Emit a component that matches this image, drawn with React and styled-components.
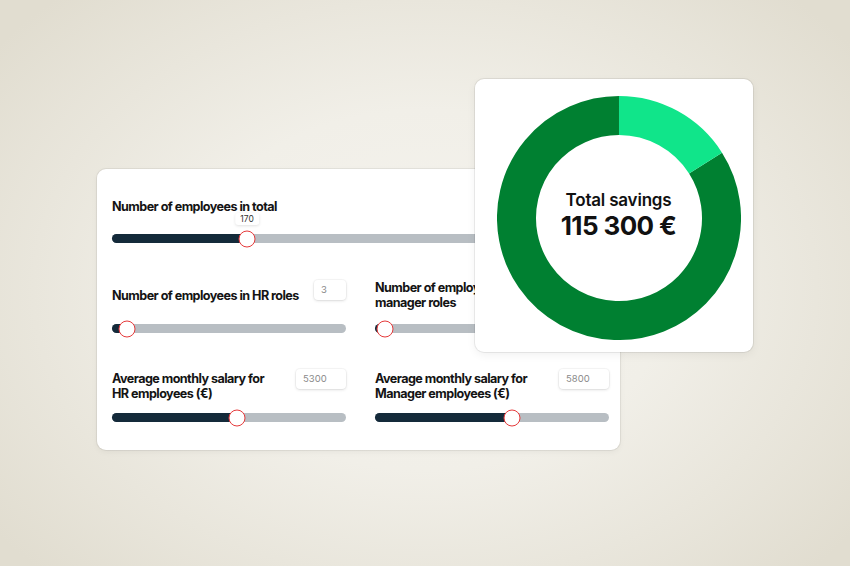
import styled, { createGlobalStyle } from "styled-components";

const GlobalStyle = createGlobalStyle`
  html, body {
    margin: 0;
    padding: 0;
  }
  body {
    font-family: Inter, "Noto Sans", sans-serif;
    color: #111;
  }
`;

const Page = styled.div`
  width: 850px;
  height: 566px;
  overflow: hidden;
  background: radial-gradient(
    ellipse 540px 400px at 425px 290px,
    #f5f3ee 0%,
    #f1efe8 45%,
    #e1ddd0 100%
  );
  display: grid;
  grid-template-columns: 97px 378px 145px 133px 1fr;
  grid-template-rows: 79px 90px 183px 98px 1fr;
`;

const InputsCard = styled.div`
  grid-column: 2 / 4;
  grid-row: 3 / 5;
  background: #fff;
  border-radius: 9px;
  box-shadow: 0 0 0 1px rgba(0, 0, 0, 0.06), 0 2px 6px rgba(0, 0, 0, 0.05);
  padding: 27px 13px 0 15px;
  display: grid;
  grid-template-columns: 234px 234px;
  column-gap: 29px;
  grid-template-rows: 72px 101px auto;
`;

const ChartCard = styled.div`
  grid-column: 3 / 5;
  grid-row: 2 / 4;
  background: #fff;
  border-radius: 9px;
  box-shadow: 0 0 0 1px rgba(0, 0, 0, 0.07), 0 3px 10px rgba(0, 0, 0, 0.06);
  z-index: 2;
  display: flex;
  justify-content: center;
  align-items: flex-start;
  padding: 17px 0 0 9px;
`;

const Field = styled.div`
  grid-column: ${(p) => (p.$wide ? "1 / 3" : "auto")};
  display: flex;
  flex-direction: column;
`;

const FieldHead = styled.div`
  display: flex;
  justify-content: space-between;
  align-items: flex-start;
  box-sizing: border-box;
  height: ${(p) => p.$h}px;
  padding-top: ${(p) => p.$pt || 0}px;
`;

const Label = styled.div`
  font-size: 12.6px;
  font-weight: 700;
  line-height: 15px;
  letter-spacing: -0.55px;
  color: #141414;
  padding-top: ${(p) => p.$pt || 0}px;
`;

const ValueBox = styled.div`
  width: ${(p) => p.$w}px;
  height: 20px;
  box-sizing: border-box;
  border-radius: 4px;
  background: #fff;
  box-shadow: 0 1px 3px rgba(0, 0, 0, 0.12), 0 0 0 1px rgba(0, 0, 0, 0.03);
  font-size: 9.5px;
  color: #8a8a8a;
  padding: 4px 0 0 7px;
`;

const Track = styled.div`
  position: relative;
  height: 9px;
  border-radius: 5px;
  background: #b8bec3;
  width: ${(p) => p.$w}px;
`;

const Fill = styled.div`
  height: 100%;
  border-radius: 5px 0 0 5px;
  background: #142a3a;
`;

const Thumb = styled.div`
  position: absolute;
  top: 50%;
  width: 17px;
  height: 17px;
  box-sizing: border-box;
  border-radius: 50%;
  background: #fff;
  border: 1.5px solid #e5393a;
  transform: translate(-50%, -50%);
`;

const Bubble = styled.div`
  position: absolute;
  bottom: 18px;
  transform: translateX(-50%);
  padding: 1px 5px;
  line-height: 10px;
  border-radius: 3px;
  background: #fff;
  box-shadow: 0 1px 3px rgba(0, 0, 0, 0.12);
  font-size: 8.5px;
  color: #333;
`;

const Donut = styled.div`
  position: relative;
  width: 244px;
  height: 244px;
`;

const Center = styled.div`
  position: absolute;
  inset: 0;
  display: flex;
  flex-direction: column;
  align-items: center;
  justify-content: center;
  padding-bottom: 6px;
  box-sizing: border-box;
`;

const CenterTitle = styled.div`
  font-size: 17px;
  font-weight: 600;
  letter-spacing: -0.2px;
  line-height: 22px;
`;

const CenterValue = styled.div`
  font-size: 26px;
  font-weight: 700;
  letter-spacing: -0.6px;
  line-height: 30px;
`;

const Slider = ({ width, pos, bubble }) => (
  <Track $w={width}>
    <Fill style={{ width: pos }} />
    {bubble && <Bubble style={{ left: pos }}>{bubble}</Bubble>}
    <Thumb style={{ left: pos }} />
  </Track>
);

const arc = (cx, cy, r, a0, a1) => {
  const p = (a) => [cx + r * Math.sin(a), cy - r * Math.cos(a)];
  const [x0, y0] = p(a0);
  const [x1, y1] = p(a1);
  const large = a1 - a0 > Math.PI ? 1 : 0;
  return `M ${x0} ${y0} A ${r} ${r} 0 ${large} 1 ${x1} ${y1}`;
};

const App = () => {
  const share = 0.16 * Math.PI * 2;
  return (
    <Page>
      <GlobalStyle />
      <InputsCard>
        <Field $wide>
          <FieldHead $h={38}>
            <Label $pt={3}>Number of employees in total</Label>
          </FieldHead>
          <Slider width={496} pos={135} bubble="170" />
        </Field>

        <Field>
          <FieldHead $h={56} $pt={12}>
            <Label $pt={8}>Number of employees in HR roles</Label>
            <ValueBox $w={32}>3</ValueBox>
          </FieldHead>
          <Slider width={234} pos={15} />
        </Field>
        <Field>
          <FieldHead $h={56} $pt={12}>
            <Label>
              Number of employees in
              <br />
              manager roles
            </Label>
            <ValueBox $w={32}>6</ValueBox>
          </FieldHead>
          <Slider width={234} pos={10} />
        </Field>

        <Field>
          <FieldHead $h={44}>
            <Label $pt={2}>
              Average monthly salary for
              <br />
              HR employees (€)
            </Label>
            <ValueBox $w={50}>5300</ValueBox>
          </FieldHead>
          <Slider width={234} pos={125} />
        </Field>
        <Field>
          <FieldHead $h={44}>
            <Label $pt={2}>
              Average monthly salary for
              <br />
              Manager employees (€)
            </Label>
            <ValueBox $w={50}>5800</ValueBox>
          </FieldHead>
          <Slider width={234} pos={137} />
        </Field>
      </InputsCard>

      <ChartCard>
        <Donut>
          <svg width="244" height="244" viewBox="0 0 244 244">
            <path
              d={arc(122, 122, 102.5, share, Math.PI * 2 - 0.0001)}
              fill="none"
              stroke="#008031"
              strokeWidth="39"
            />
            <path
              d={arc(122, 122, 102.5, 0, share)}
              fill="none"
              stroke="#10e58a"
              strokeWidth="39"
            />
          </svg>
          <Center>
            <CenterTitle>Total savings</CenterTitle>
            <CenterValue>115 300 €</CenterValue>
          </Center>
        </Donut>
      </ChartCard>
    </Page>
  );
};

export default App;
